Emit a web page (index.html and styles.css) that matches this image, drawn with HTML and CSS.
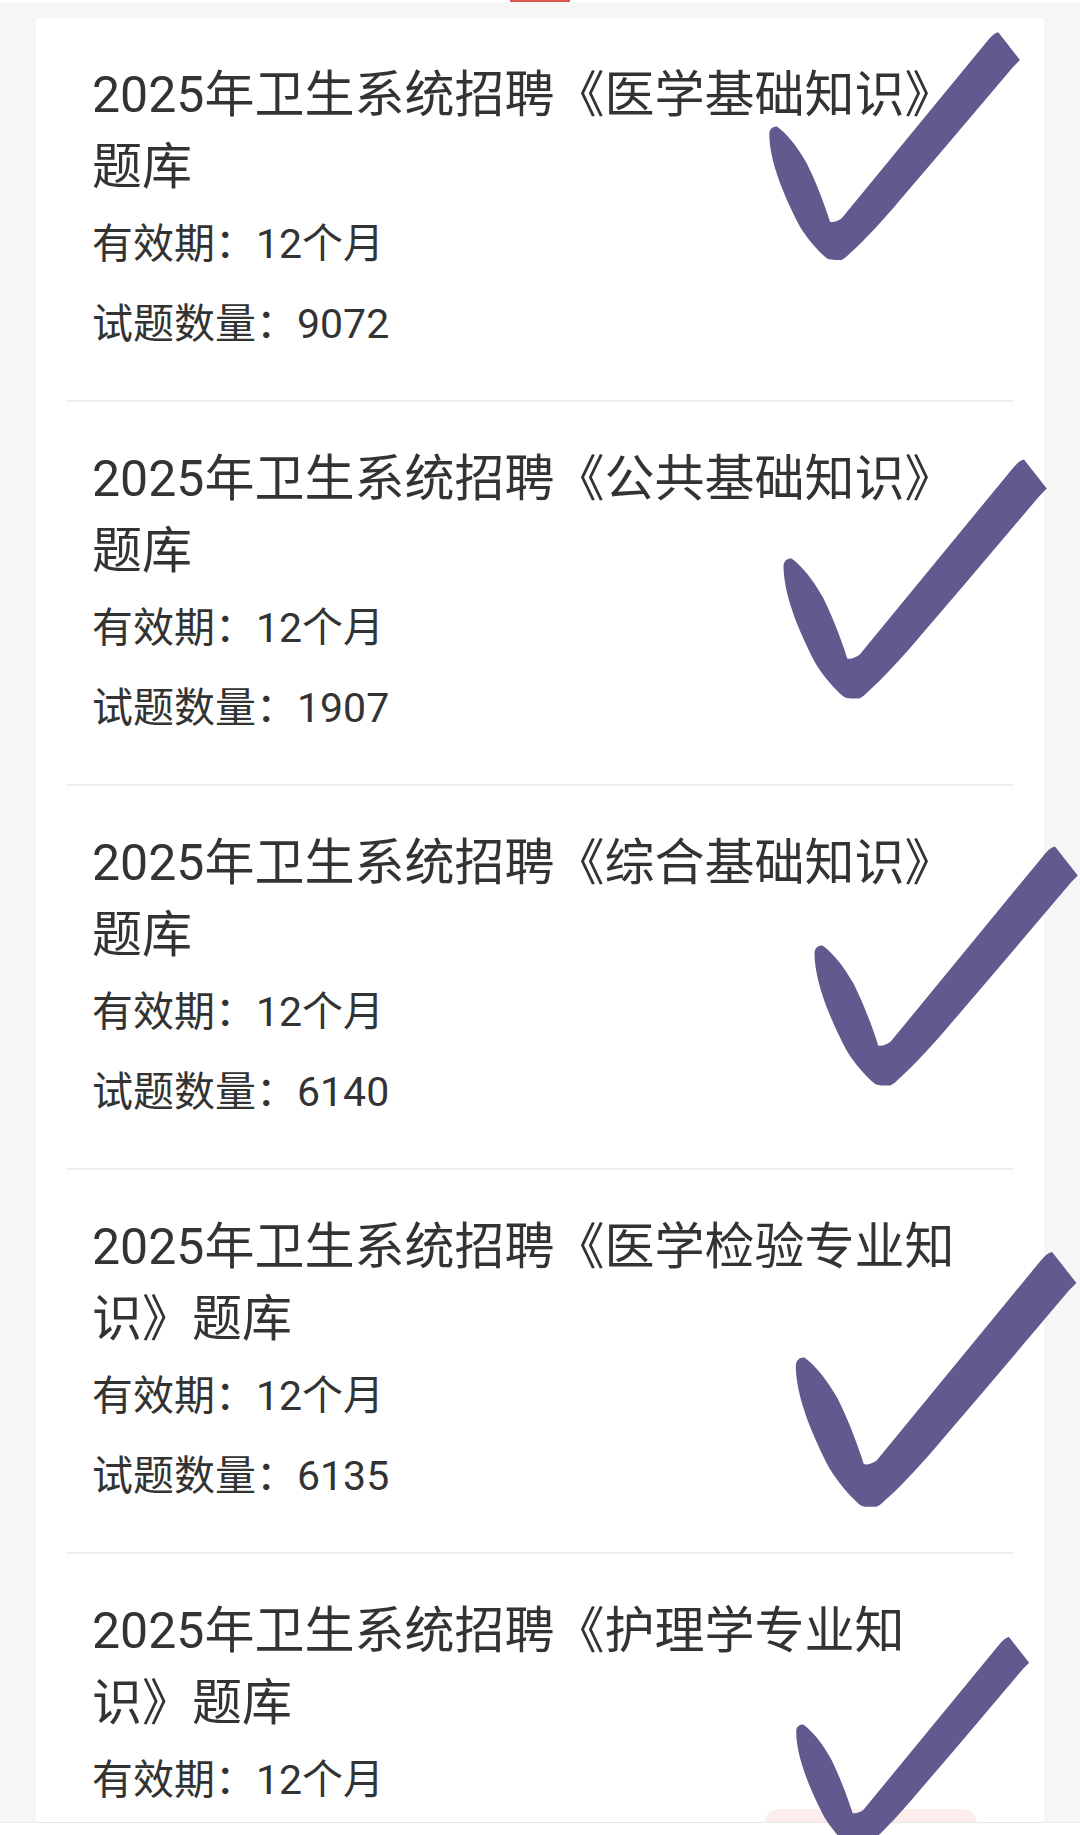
FILE: index.html
```html
<!DOCTYPE html>
<html lang="zh-CN">
<head>
<meta charset="UTF-8">
<meta name="viewport" content="width=device-width, initial-scale=1.0">
<title>题库列表</title>
<link rel="stylesheet" href="styles.css">
</head>
<body>
<svg class="defs" width="0" height="0">
  <symbol id="tick" viewBox="0 0 260 240">
    <path d="M4.3 107 C4 101 8 98 12.3 98.7 C22 106 32 118 41.7 135.3 C50 152 58 172 65 193.7 C68 195 73 193 76.7 190.3 L221.7 13.7 C226 9 229 5 233.3 4.3 L255 32 L248.3 38.7 L175 125.3 L135 172 C120 190 100 212 85 225.3 C80 230 78 232 75 232 C68 232 64 232 61.7 230.3 C52 222 42 210 35 198.7 C28 186 16 160 11.7 145.3 C8 134 4.5 120 4.3 107 Z"/>
  </symbol>
</svg>

<div class="tab-strip"><span class="tab-indicator"></span></div>

<div class="bank-list">
  <div class="bank-item">
    <h3 class="bank-title">2025年卫生系统招聘《医学基础知识》题库</h3>
    <p class="bank-meta">有效期：12个月</p>
    <p class="bank-meta">试题数量：9072</p>
    <svg class="tick tick-1"><use href="#tick"/></svg>
  </div>
  <div class="bank-item">
    <h3 class="bank-title">2025年卫生系统招聘《公共基础知识》题库</h3>
    <p class="bank-meta">有效期：12个月</p>
    <p class="bank-meta">试题数量：1907</p>
    <svg class="tick tick-2"><use href="#tick"/></svg>
  </div>
  <div class="bank-item">
    <h3 class="bank-title">2025年卫生系统招聘《综合基础知识》题库</h3>
    <p class="bank-meta">有效期：12个月</p>
    <p class="bank-meta">试题数量：6140</p>
    <svg class="tick tick-3"><use href="#tick"/></svg>
  </div>
  <div class="bank-item">
    <h3 class="bank-title">2025年卫生系统招聘《医学检验专业知识》题库</h3>
    <p class="bank-meta">有效期：12个月</p>
    <p class="bank-meta">试题数量：6135</p>
    <svg class="tick tick-4"><use href="#tick"/></svg>
  </div>
  <div class="bank-item">
    <h3 class="bank-title">2025年卫生系统招聘《护理学专业知识》题库</h3>
    <p class="bank-meta">有效期：12个月</p>
    <svg class="tick tick-5"><use href="#tick"/></svg>
  </div>
</div>

<div class="buy-btn"></div>
<div class="bottom-bar"></div>
</body>
</html>
```

FILE: styles.css
```css
html, body {
  margin: 0;
  overflow: hidden;
}
body {
  font-family: Roboto, "Noto Sans CJK SC", sans-serif;
  background: #f6f6f6;
  color: #333;
}
.defs {
  position: absolute;
}
.tab-strip {
  height: 2px;
  background: #fff;
  display: flex;
  justify-content: center;
}
.tab-indicator {
  width: 60px;
  height: 2px;
  background: #d9574a;
}
.bank-list {
  margin: 16px 36px 0;
  background: #fff;
  display: flex;
  flex-direction: column;
}
.bank-item {
  position: relative;
  margin: 0 30px;
  padding: 41px 50px 46px 26px;
  border-bottom: 2px solid #f1f1f1;
  display: flex;
  flex-direction: column;
  gap: 20px;
}
.bank-title {
  margin: 0 0 -9px;
  font-size: 50px;
  font-weight: normal;
  line-height: 72px;
}
.bank-meta {
  margin: 0;
  font-size: 41px;
  line-height: 60px;
}
.tick {
  position: absolute;
  z-index: 3;
  fill: #625a8f;
}
.tick-1 { left: 699px; top: 10px; width: 260px; height: 240px; }
.tick-2 { left: 713px; top: 53px; width: 273px; height: 252px; }
.tick-3 { left: 744px; top: 56px; width: 273px; height: 252px; }
.tick-4 { left: 725px; top: 77px; width: 291px; height: 269px; }
.tick-5 { left: 726px; top: 79px; width: 242px; height: 223px; }
.buy-btn {
  position: fixed;
  left: 765px;
  bottom: 12px;
  width: 212px;
  height: 14px;
  border-radius: 30px 30px 0 0;
  background: #fdeeec;
  z-index: 1;
}
.bottom-bar {
  position: fixed;
  left: 0;
  right: 0;
  bottom: 0;
  height: 12px;
  background: #fff;
  border-top: 1px solid #e8e8e8;
  z-index: 2;
}
```
